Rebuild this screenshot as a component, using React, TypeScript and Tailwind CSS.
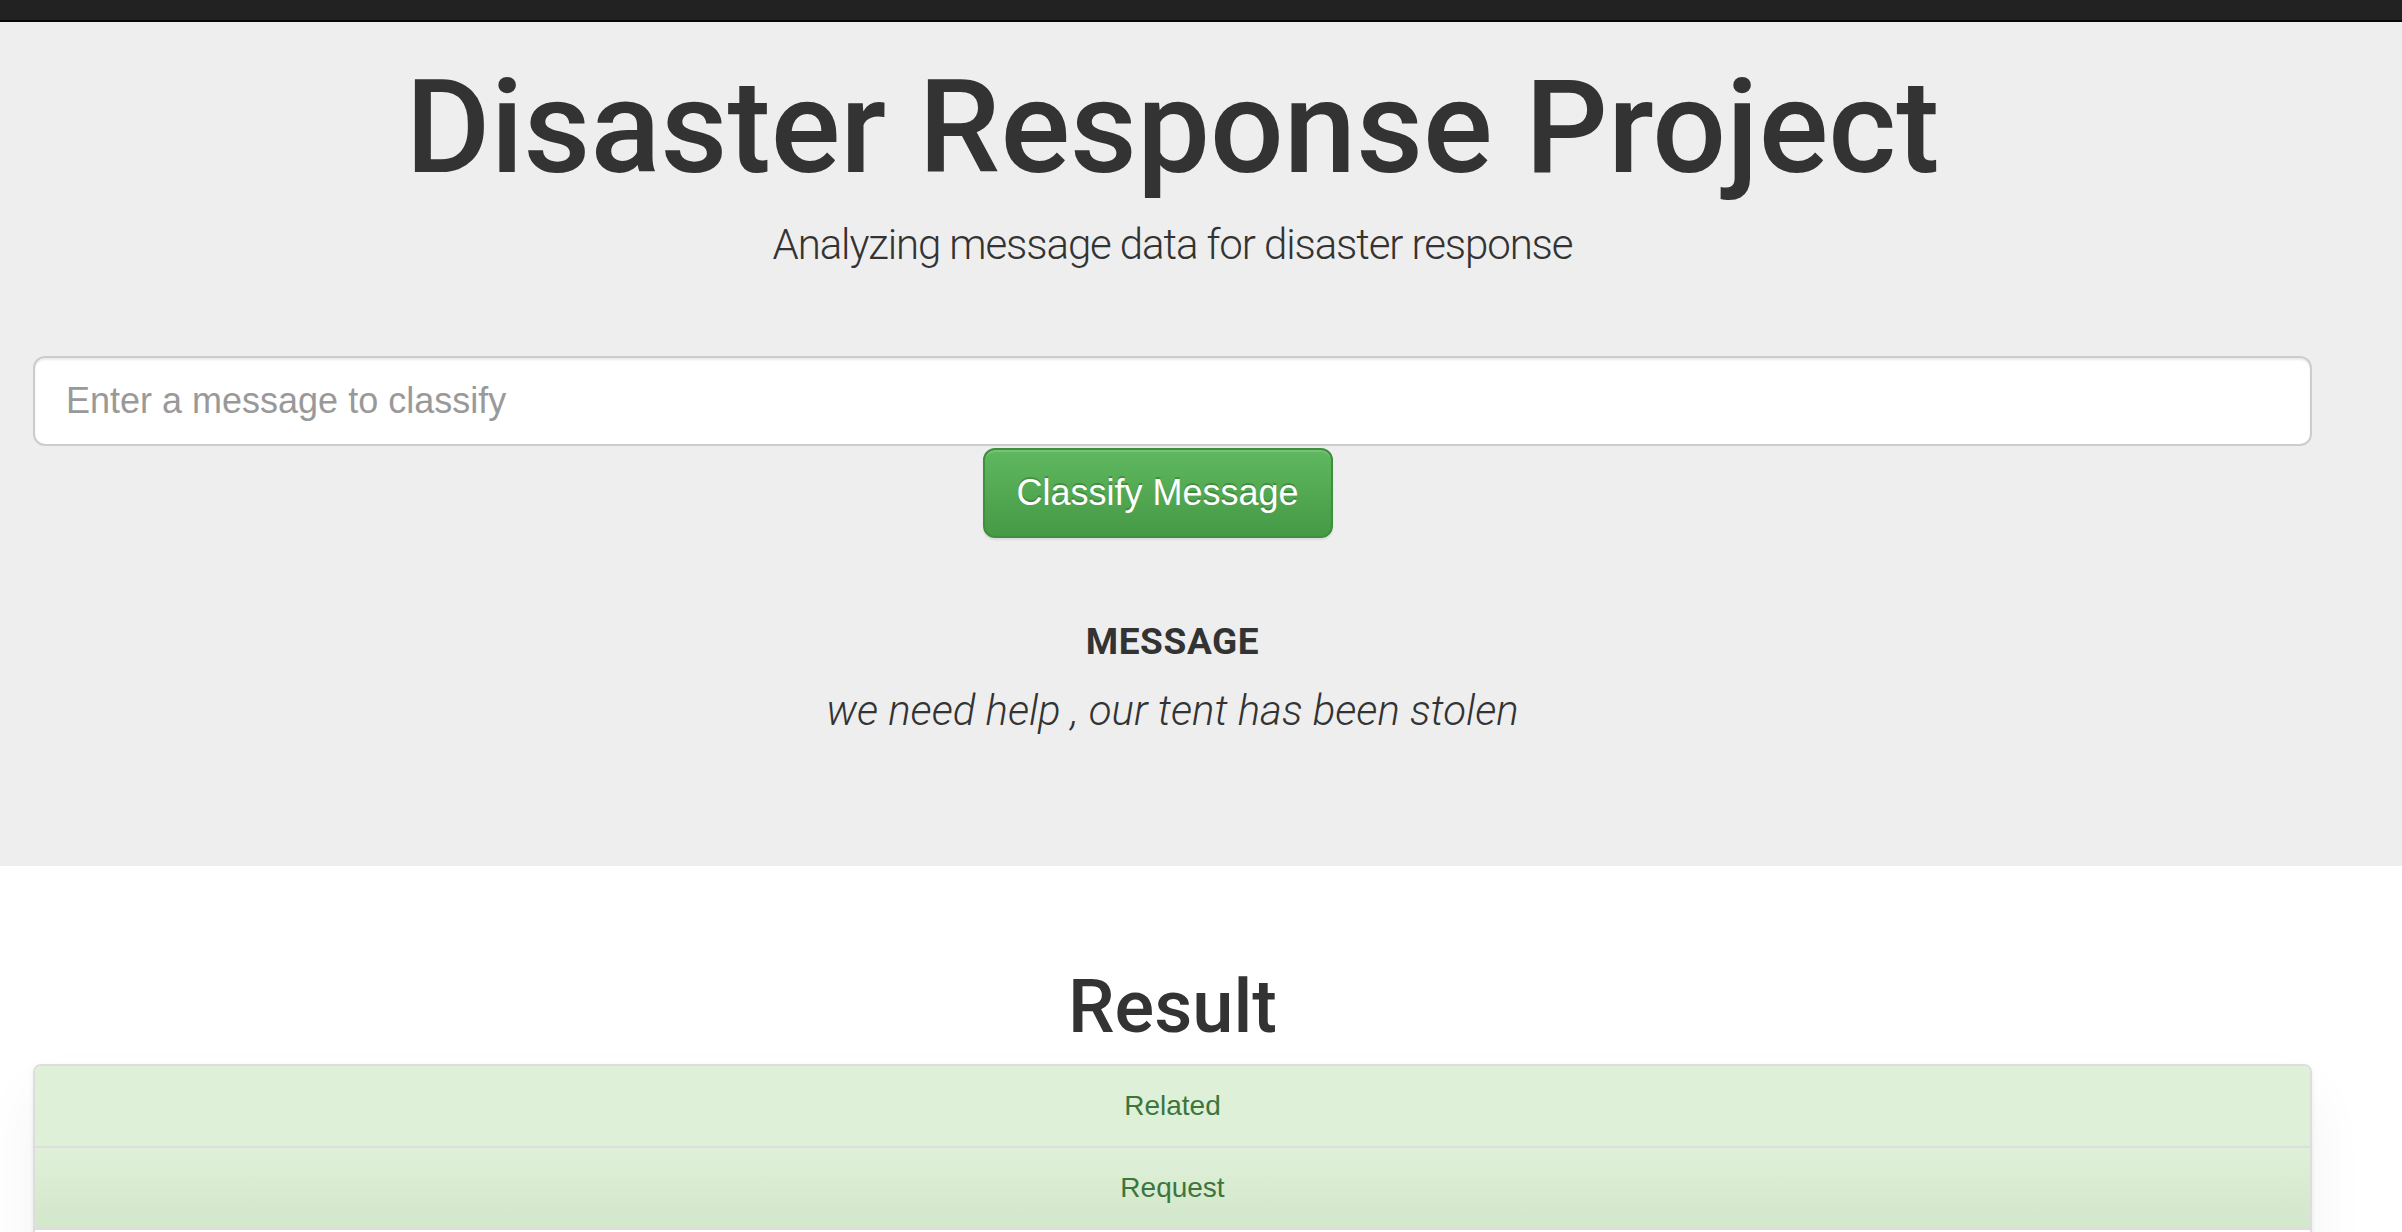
import React from 'react';

const results = [
    { label: 'Related', tone: 'flat' },
    { label: 'Request', tone: 'fade' },
    { label: 'Aid Related', tone: 'plain' },
];

export default function App() {
    return (
        <div className="min-h-screen bg-white text-[#333] font-['Liberation_Sans',Arial,sans-serif]">
            {/* Navbar strip */}
            <div className="h-[22px] bg-[#222] border-b-2 border-[#080808]" />

            {/* Jumbotron */}
            <div className="bg-[#eee] h-[844px]">
                <div className="ml-[33px] w-[2279px] flex flex-col">
                    <h1 className="mt-[41px] text-center text-[130px] leading-none font-medium font-['Roboto',sans-serif]">
                        Disaster Response Project
                    </h1>
                    <p className="mt-[31px] text-center text-[42px] leading-none tracking-[-1.1px] font-light font-['Roboto',sans-serif]">
                        Analyzing message data for disaster response
                    </p>

                    <input
                        type="text"
                        placeholder="Enter a message to classify"
                        className="mt-[90px] h-[90px] w-full rounded-[12px] border-2 border-[#ccc] bg-white px-[31px] text-[36px] text-[#555] placeholder:text-[#999] shadow-[inset_0_2px_2px_rgba(0,0,0,0.075)] outline-none"
                    />
                    <div className="mt-[2px] ml-[41.6667%]">
                        <button className="h-[90px] w-[350px] rounded-[12px] border-2 border-[#3e8f3e] bg-gradient-to-b from-[#5fb85f] to-[#459a45] text-[36px] text-white [text-shadow:0_-2px_0_rgba(0,0,0,0.2)] shadow-[inset_0_2px_0_rgba(255,255,255,0.15),0_2px_2px_rgba(0,0,0,0.075)]">
                            Classify Message
                        </button>
                    </div>

                    <h2 className="mt-[85px] text-center text-[37px] leading-none tracking-[0.6px] font-bold font-['Roboto',sans-serif]">
                        MESSAGE
                    </h2>
                    <p className="mt-[30px] text-center text-[42px] leading-none font-light italic font-['Roboto',sans-serif]">
                        we need help , our tent has been stolen
                    </p>
                </div>
            </div>

            {/* Results */}
            <div className="ml-[33px] w-[2279px] flex flex-col">
                <h1 className="mt-[104px] text-center text-[74px] leading-none font-medium font-['Roboto',sans-serif]">
                    Result
                </h1>
                <div className="mt-[20px] rounded-[8px] border-2 border-[#ddd] overflow-hidden shadow-[0_2px_4px_rgba(0,0,0,0.075),0_30px_60px_rgba(0,0,0,0.05)]">
                    {results.map((r, i) => (
                        <div
                            key={r.label}
                            className={`py-[20px] text-center text-[28px] leading-[40px] ${i > 0 ? 'border-t-2 border-[#ddd]' : ''} ${
                                r.tone === 'flat'
                                    ? 'bg-[#dff0d8] text-[#3c763d]'
                                    : r.tone === 'fade'
                                    ? 'bg-gradient-to-b from-[#dff0d8] to-[#d3e7cb] text-[#3c763d]'
                                    : 'bg-white text-[#555]'
                            }`}
                        >
                            {r.label}
                        </div>
                    ))}
                </div>
            </div>
        </div>
    );
}
